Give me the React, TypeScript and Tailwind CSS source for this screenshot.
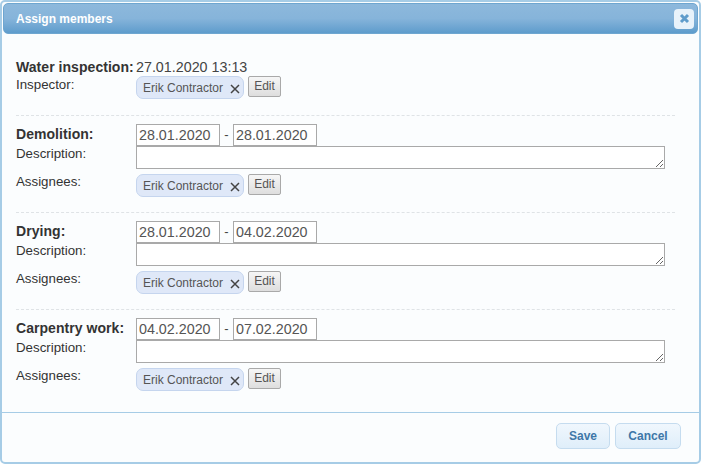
const sections = [
  { name: "Demolition:", from: "28.01.2020", to: "28.01.2020" },
  { name: "Drying:", from: "28.01.2020", to: "04.02.2020" },
  { name: "Carpentry work:", from: "04.02.2020", to: "07.02.2020" },
];

function Chip() {
  return (
    <div className="flex items-start">
      <div className="flex h-[23px] w-[108px] items-center rounded-[7px] border border-[#c5d5ee] bg-[#dfe8f8] pl-[6px] text-[12px] text-[#555]">
        <span className="whitespace-nowrap">Erik Contractor</span>
        <svg className="ml-[7px] mt-[2px]" width="10" height="10" viewBox="0 0 10 10" fill="none">
          <path d="M1 1l8 8M9 1l-8 8" stroke="#444" strokeWidth="1.5" />
        </svg>
      </div>
      <button className="ml-[4px] h-[21px] w-[33px] rounded-[2px] border border-[#a9a9a9] bg-gradient-to-b from-[#f6f6f6] to-[#dedede] text-[12px] leading-[17px] text-[#555]">
        Edit
      </button>
    </div>
  );
}

function DateInput({ value }: { value: string }) {
  return (
    <input
      readOnly
      value={value}
      className="h-[22px] w-[84px] border border-[#a9a9a9] bg-white px-[2px] text-[14.3px] text-[#555] outline-none"
    />
  );
}

function Section({ name, from, to }: { name: string; from: string; to: string }) {
  return (
    <div className="border-b border-dashed border-[#dfe3e6] pt-[8px] pb-[15px] last:border-b-0">
      <div className="flex items-start">
        <div className="w-[120px] pt-[1px] text-[14px] font-bold leading-[18px] tracking-[0.05px] text-[#333]">{name}</div>
        <DateInput value={from} />
        <span className="w-[13px] text-center text-[13px] leading-[22px] text-[#444]">-</span>
        <DateInput value={to} />
      </div>
      <div className="flex items-start">
        <div className="w-[120px] text-[13.3px] leading-[15px] text-[#333]">Description:</div>
        <textarea
          readOnly
          className="block h-[23px] w-[529px] border border-[#a9a9a9] bg-white outline-none"
        />
      </div>
      <div className="mt-[5px] flex items-start">
        <div className="w-[120px] text-[13.3px] leading-[15px] text-[#333]">Assignees:</div>
        <Chip />
      </div>
    </div>
  );
}

export default function App() {
  return (
    <div
      className="flex h-[464px] w-[701px] flex-col rounded-[5px] border-2 border-[#a6cce6] bg-[#fbfdfe] text-[#333]"
      style={{ fontFamily: '"Liberation Sans", Arial, sans-serif' }}
    >
      <div className="mx-px mt-px flex h-[31px] shrink-0 items-center justify-between rounded-[5px] border border-[#6ea6d0] bg-gradient-to-b from-[#8db8dc] via-[#86b4da] to-[#5e9ccc] pl-[12px] pr-[3px]">
        <span className="text-[12px] font-bold text-white">Assign members</span>
        <div className="flex h-[20px] w-[20px] items-center justify-center rounded-[4px] bg-[#e8f2fa]">
          <svg width="11" height="11" viewBox="0 0 11 11" fill="none">
            <path d="M2 2l7 7M9 2l-7 7" stroke="#5f9ccb" strokeWidth="3" />
          </svg>
        </div>
      </div>

      <div className="flex-1 pl-[14px] pr-[24px] pt-[22px]">
        <div className="border-b border-dashed border-[#dfe3e6] pb-[16px]">
          <div className="flex h-[20px] items-start pt-[2px]">
            <div className="w-[120px] whitespace-nowrap text-[14px] font-bold leading-[18px] tracking-[0.05px] text-[#333]">Water inspection:</div>
            <span className="text-[14.3px] leading-[18px] text-[#444]">27.01.2020 13:13</span>
          </div>
          <div className="flex items-start">
            <div className="w-[120px] pt-[1px] text-[13.3px] leading-[15px] text-[#333]">Inspector:</div>
            <Chip />
          </div>
        </div>
        {sections.map((s) => (
          <Section key={s.name} {...s} />
        ))}
      </div>

      <div className="flex h-[50px] shrink-0 justify-end gap-[5px] border-t border-[#a6cce6] pr-[18px] pt-[10px]">
        <button className="h-[26px] w-[54px] rounded-[5px] border border-[#c5dcef] bg-gradient-to-b from-[#f0f7fd] to-[#dfeefa] text-[12px] font-bold text-[#3f77a8]">
          Save
        </button>
        <button className="h-[26px] w-[66px] rounded-[5px] border border-[#c5dcef] bg-gradient-to-b from-[#f0f7fd] to-[#dfeefa] text-[12px] font-bold text-[#3f77a8]">
          Cancel
        </button>
      </div>
    </div>
  );
}
